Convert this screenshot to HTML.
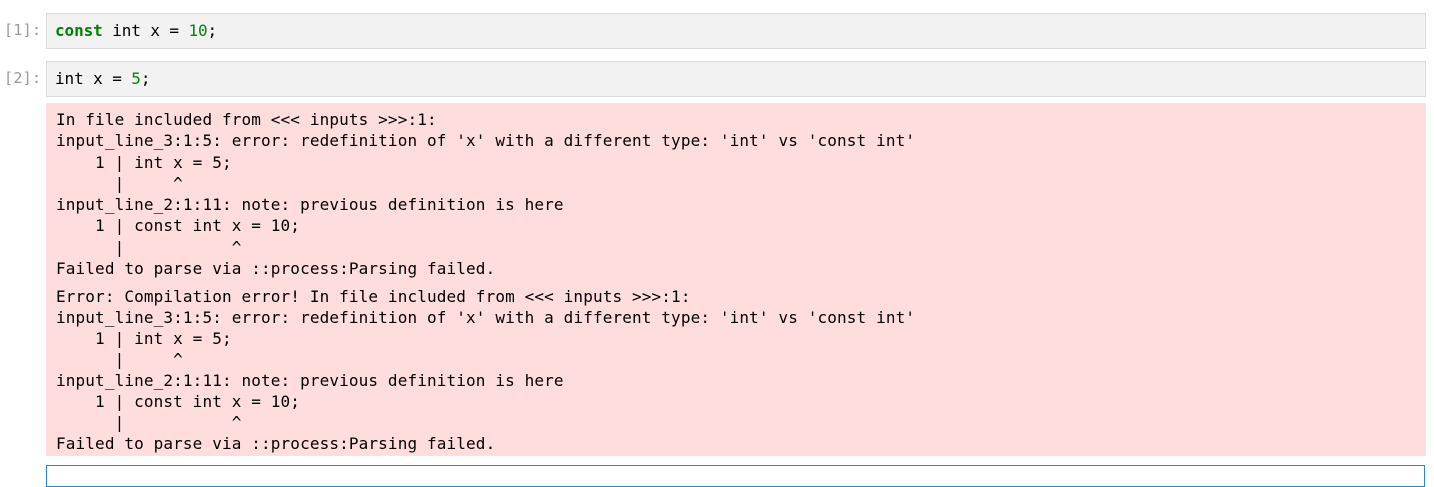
<!DOCTYPE html>
<html><head><style>
body{margin:0;background:#fff;width:1434px;height:471px;overflow:hidden;position:relative;font-family:"DejaVu Sans Mono","Liberation Mono",monospace;}
.p{position:absolute;left:4px;color:#999;font-size:15px;letter-spacing:0.3px}
.in{position:absolute;left:46px;width:1378px;height:34px;background:#f2f2f2;border:1px solid #dcdcdc;}
.in span.t{position:absolute;left:8px;top:7px;font-size:16px;letter-spacing:-0.1px;color:#000;white-space:pre}
.k{color:#008000;font-weight:bold}.n{color:#080}
.out{position:absolute;left:46px;top:103px;width:1380px;height:353px;background:#fdd;}
pre{margin:0;position:absolute;left:10px;font-family:inherit;font-size:16px;letter-spacing:0.13px;line-height:21.3px;color:#000}
.cur{position:absolute;left:46px;top:465px;width:1377px;height:20px;border:1px solid #1e88e5;}
</style></head><body>
<div class="p" style="top:21px">[1]:</div>
<div class="in" style="top:13px"><span class="t"><span class="k">const</span> int x = <span class="n">10</span>;</span></div>
<div class="p" style="top:69px">[2]:</div>
<div class="in" style="top:61px"><span class="t">int x = <span class="n">5</span>;</span></div>
<div class="out">
<pre style="top:6px">In file included from &lt;&lt;&lt; inputs &gt;&gt;&gt;:1:
input_line_3:1:5: error: redefinition of 'x' with a different type: 'int' vs 'const int'
    1 | int x = 5;
      |     ^
input_line_2:1:11: note: previous definition is here
    1 | const int x = 10;
      |           ^
Failed to parse via ::process:Parsing failed.</pre>
<pre style="top:183px;line-height:21px">Error: Compilation error! In file included from &lt;&lt;&lt; inputs &gt;&gt;&gt;:1:
input_line_3:1:5: error: redefinition of 'x' with a different type: 'int' vs 'const int'
    1 | int x = 5;
      |     ^
input_line_2:1:11: note: previous definition is here
    1 | const int x = 10;
      |           ^
Failed to parse via ::process:Parsing failed.</pre>
</div>
<div class="cur"></div>
</body></html>
